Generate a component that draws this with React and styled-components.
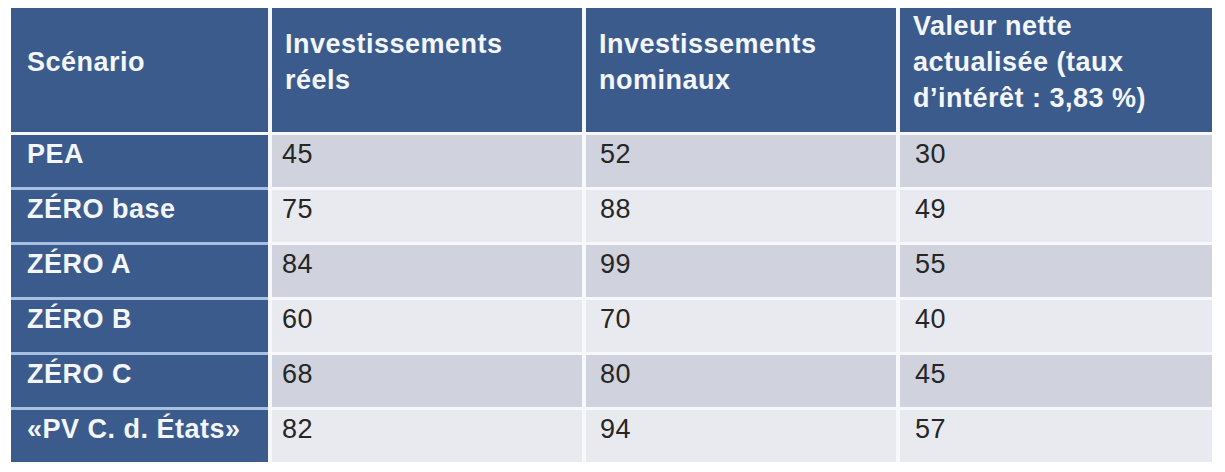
import styled, { createGlobalStyle } from "styled-components";

const GlobalStyle = createGlobalStyle`
  body {
    margin: 0;
    background: #ffffff;
    font-family: "Liberation Sans", Arial, sans-serif;
  }
`;

const Page = styled.div`
  padding: 8px 0 0 11px;
`;

const Table = styled.div`
  display: grid;
  grid-template-columns: 257px 310px 310px 312px;
  grid-template-rows: 124px repeat(6, 52px);
  column-gap: 4px;
  row-gap: 3px;
  width: 1201px;
  background: #f7f8fb;
`;

const HeadCell = styled.div`
  display: flex;
  align-items: center;
  padding: 0 8px 16px ${(p) => (p.first ? "16px" : "13px")};
  background: #3c5b8d;
  color: #f3f6fb;
  font-size: 27px;
  font-weight: bold;
  line-height: 36px;
  letter-spacing: 0.5px;
`;

const RowHead = styled.div`
  padding: 1px 8px 0 16px;
  background: #3c5b8d;
  color: #f3f6fb;
  font-size: 27px;
  font-weight: bold;
  line-height: 36px;
  letter-spacing: 0.5px;
  box-shadow: ${(p) => (p.top ? "none" : "0 -3px 0 #a8c1e3")};
`;

const Cell = styled.div`
  padding: 1px 10px 0 ${(p) => p.pad || 14}px;
  background: ${(p) => (p.odd ? "#d0d3dd" : "#e9eaef")};
  color: #262626;
  font-size: 27px;
  line-height: 36px;
  letter-spacing: 0.5px;
`;

const headers = [
  ["Scénario"],
  ["Investissements", "réels"],
  ["Investissements", "nominaux"],
  ["Valeur nette", "actualisée (taux", "d’intérêt : 3,83 %)"],
];

const rows = [
  ["PEA", 45, 52, 30],
  ["ZÉRO base", 75, 88, 49],
  ["ZÉRO A", 84, 99, 55],
  ["ZÉRO B", 60, 70, 40],
  ["ZÉRO C", 68, 80, 45],
  ["«PV C. d. États»", 82, 94, 57],
];

const pads = [10, 14, 15];

export default function App() {
  return (
    <Page>
      <GlobalStyle />
      <Table>
        {headers.map((lines, i) => (
          <HeadCell key={i} first={i === 0}>
            <div>
              {lines.map((l, j) => (
                <div key={j}>{l}</div>
              ))}
            </div>
          </HeadCell>
        ))}
        {rows.map(([name, ...vals], r) => [
          <RowHead key={name} top={r === 0}>
            {name}
          </RowHead>,
          ...vals.map((v, c) => (
            <Cell key={name + c} odd={r % 2 === 0} pad={pads[c]}>
              {v}
            </Cell>
          )),
        ])}
      </Table>
    </Page>
  );
}
